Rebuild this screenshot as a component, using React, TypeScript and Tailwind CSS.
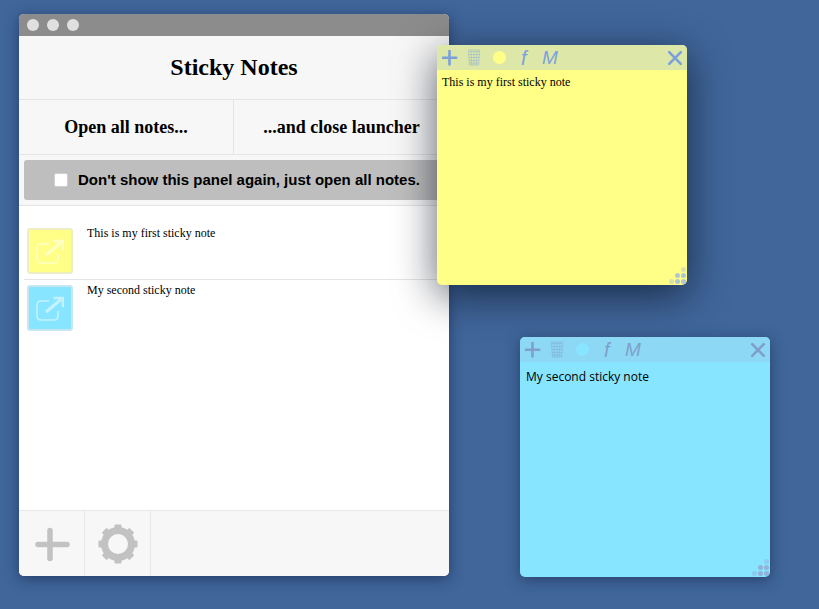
import React from "react";

const Plus = ({ c }: { c: string }) => (
  <svg width="16" height="16" viewBox="0 0 16 16"><path d="M7.5 1V14.5M0.8 7.8H14.2" stroke={c} strokeWidth="2.6" strokeLinecap="round" /></svg>
);
const Trash = ({ c }: { c: string }) => (
  <svg width="14" height="17" viewBox="0 0 14 17" fill="none" stroke={c} strokeWidth="0.7" opacity="0.6">
    <path d="M1 1H13M1 2.5H13M1.5 2.5L2.5 16H11.5L12.5 2.5M4 2.5L4.8 16M7 2.5V16M10 2.5L9.2 16M1.7 5.5H12.3M1.9 8.5H12.1M2.1 11.5H11.9M2.3 14H11.7" />
  </svg>
);
const Close = ({ c }: { c: string }) => (
  <svg width="16" height="16" viewBox="0 0 16 16"><path d="M2.2 2.2L13.8 13.8M13.8 2.2L2.2 13.8" stroke={c} strokeWidth="2.6" strokeLinecap="round" /></svg>
);
const Grip = ({ a, b }: { a: string; b: string }) => (
  <div className="absolute right-[1px] bottom-[1px] grid grid-cols-3 gap-[1px]">
    {[0, 0, 1, 0, 2, 2, 1, 2, 2].map((v, i) => (
      <span key={i} className="w-[5px] h-[5px] rounded-full" style={{ background: v === 2 ? a : v === 1 ? b : "transparent" }} />
    ))}
  </div>
);
const External = ({ c }: { c: string }) => (
  <svg width="28" height="25" viewBox="0 0 28 25" fill="none" stroke={c} strokeWidth="1.6">
    <path d="M22 15V20Q22 24 18 24H5Q1 24 1 20V9Q1 5 5 5H13" />
    <path d="M10 16L25 3.5" strokeWidth="3.2" />
    <path d="M17.5 2H27V11" strokeWidth="2.6" />
  </svg>
);

function Thumb({ cls }: { cls: string }) {
  return (
    <div className={`w-[46px] h-[46px] shrink-0 mt-[2px] flex items-center justify-center rounded-[3px] border-2 ${cls}`}>
      <External c="#ffffff80" />
    </div>
  );
}

function Note({ cls, head, dot, icon, text, font, gripA, gripB }: { cls: string; head: string; dot: string; icon: string; text: string; font: string; gripA: string; gripB: string }) {
  const glyph = "leading-none italic font-['Liberation_Sans',sans-serif]";
  return (
    <div className={`absolute w-[250px] h-[240px] rounded-[5px] overflow-hidden flex flex-col ${cls}`}>
      <div className={`h-[25px] shrink-0 flex items-center pl-[5px] pr-[4px] ${head}`}>
        <Plus c={icon} />
        <span className="ml-[9px] flex"><Trash c={icon} /></span>
        <span className={`ml-[12px] w-[13px] h-[13px] rounded-full ${dot}`} />
        <span className={`ml-[15px] w-[9px] text-[20px] ${glyph}`} style={{ color: icon }}>f</span>
        <span className={`ml-[12px] text-[19px] ${glyph}`} style={{ color: icon }}>M</span>
        <span className="ml-auto flex"><Close c={icon} /></span>
      </div>
      <div className={`text-black ${font}`}>{text}</div>
      <Grip a={gripA} b={gripB} />
    </div>
  );
}

export default function App() {
  return (
    <div className="relative w-[819px] h-[609px] overflow-hidden bg-[#40669a] font-['Liberation_Serif',serif]">
      <div className="absolute left-[19px] top-[14px] w-[430px] h-[562px] rounded-[5px] overflow-hidden bg-white flex flex-col shadow-[0_3px_14px_rgba(15,30,65,0.55)]">
        <div className="h-[22px] shrink-0 bg-[#8c8c8c] flex items-center gap-[8px] pl-[8px]">
          <span className="w-[12px] h-[12px] rounded-full bg-[#e0e0e0]" />
          <span className="w-[12px] h-[12px] rounded-full bg-[#e0e0e0]" />
          <span className="w-[12px] h-[12px] rounded-full bg-[#e0e0e0]" />
        </div>
        <div className="h-[64px] shrink-0 bg-[#f7f7f7] border-b border-[#e4e4e4] flex items-center justify-center text-[24px] font-bold text-black pb-[2px]">Sticky Notes</div>
        <div className="h-[55px] shrink-0 bg-[#f7f7f7] border-b border-[#e4e4e4] flex text-[18px] font-bold text-black">
          <div className="w-[215px] border-r border-[#e4e4e4] flex items-center justify-center">Open all notes...</div>
          <div className="flex-1 flex items-center justify-center">...and close launcher</div>
        </div>
        <div className="h-[51px] shrink-0 bg-[#f7f7f7] border-b border-[#e4e4e4] px-[5px] pt-[5px]">
          <div className="h-[40px] rounded-[3px] bg-[#bebebe] flex items-center justify-center gap-[10px] pl-[6px] font-['Liberation_Sans',sans-serif] font-bold text-[15px] text-black">
            <span className="w-[14px] h-[14px] rounded-[2px] bg-white border border-[#cfcfcf]" />
            <span>Don't show this panel again, just open all notes.</span>
          </div>
        </div>
        <div className="flex-1 bg-white text-[12px] leading-[14px] text-black">
          <div className="h-[74px] ml-[5px] pt-[20px] pl-[3px] flex gap-[14px] border-b border-[#e4e4e4]">
            <Thumb cls="bg-[#ffff88] border-[#eeeec4]" />
            <div>This is my first sticky note</div>
          </div>
          <div className="ml-[5px] pt-[3px] pl-[3px] flex gap-[14px]">
            <Thumb cls="bg-[#88e5ff] border-[#c8e6f0]" />
            <div>My second sticky note</div>
          </div>
        </div>
        <div className="h-[66px] shrink-0 bg-[#f7f7f7] border-t border-[#e8e8e8] flex">
          <div className="w-[66px] border-r border-[#e8e8e8] flex items-center justify-center">
            <svg width="40" height="40" viewBox="0 0 40 40"><path d="M18 6.5V34.5M6 20.5H35" stroke="#c2c2c2" strokeWidth="5.5" strokeLinecap="round" /></svg>
          </div>
          <div className="w-[66px] border-r border-[#e8e8e8] flex items-center justify-center">
            <svg width="40" height="40" viewBox="0 0 40 40">
              <circle cx="20" cy="20" r="13.5" fill="none" stroke="#c2c2c2" strokeWidth="7" />
              {[0, 45, 90, 135, 180, 225, 270, 315].map((a) => (
                <rect key={a} x="16.5" y="0.5" width="7" height="6" rx="1" fill="#c2c2c2" transform={`rotate(${a} 20 20)`} />
              ))}
            </svg>
          </div>
        </div>
      </div>

      <Note
        cls="left-[437px] top-[45px] bg-[#ffff88] shadow-[0_10px_40px_rgba(5,10,25,0.65)]"
        head="bg-[#dde8a8]"
        dot="bg-[#ffff88]"
        icon="#7ba0dc"
        text="This is my first sticky note"
        font="pl-[5px] pt-[3px] text-[12px] font-['Liberation_Serif',serif]"
        gripA="#b0c8d4"
        gripB="#d8e2ac"
      />
      <Note
        cls="left-[520px] top-[337px] bg-[#88e5ff] shadow-[0_3px_14px_rgba(15,30,65,0.5)]"
        head="bg-[#8dd8f4]"
        dot="bg-[#88e5ff]"
        icon="#7f9fca"
        text="My second sticky note"
        font="pl-[6px] pt-[6px] text-[12px] font-['Open_Sans',sans-serif]"
        gripA="#90b4d8"
        gripB="#8ccaee"
      />
    </div>
  );
}
